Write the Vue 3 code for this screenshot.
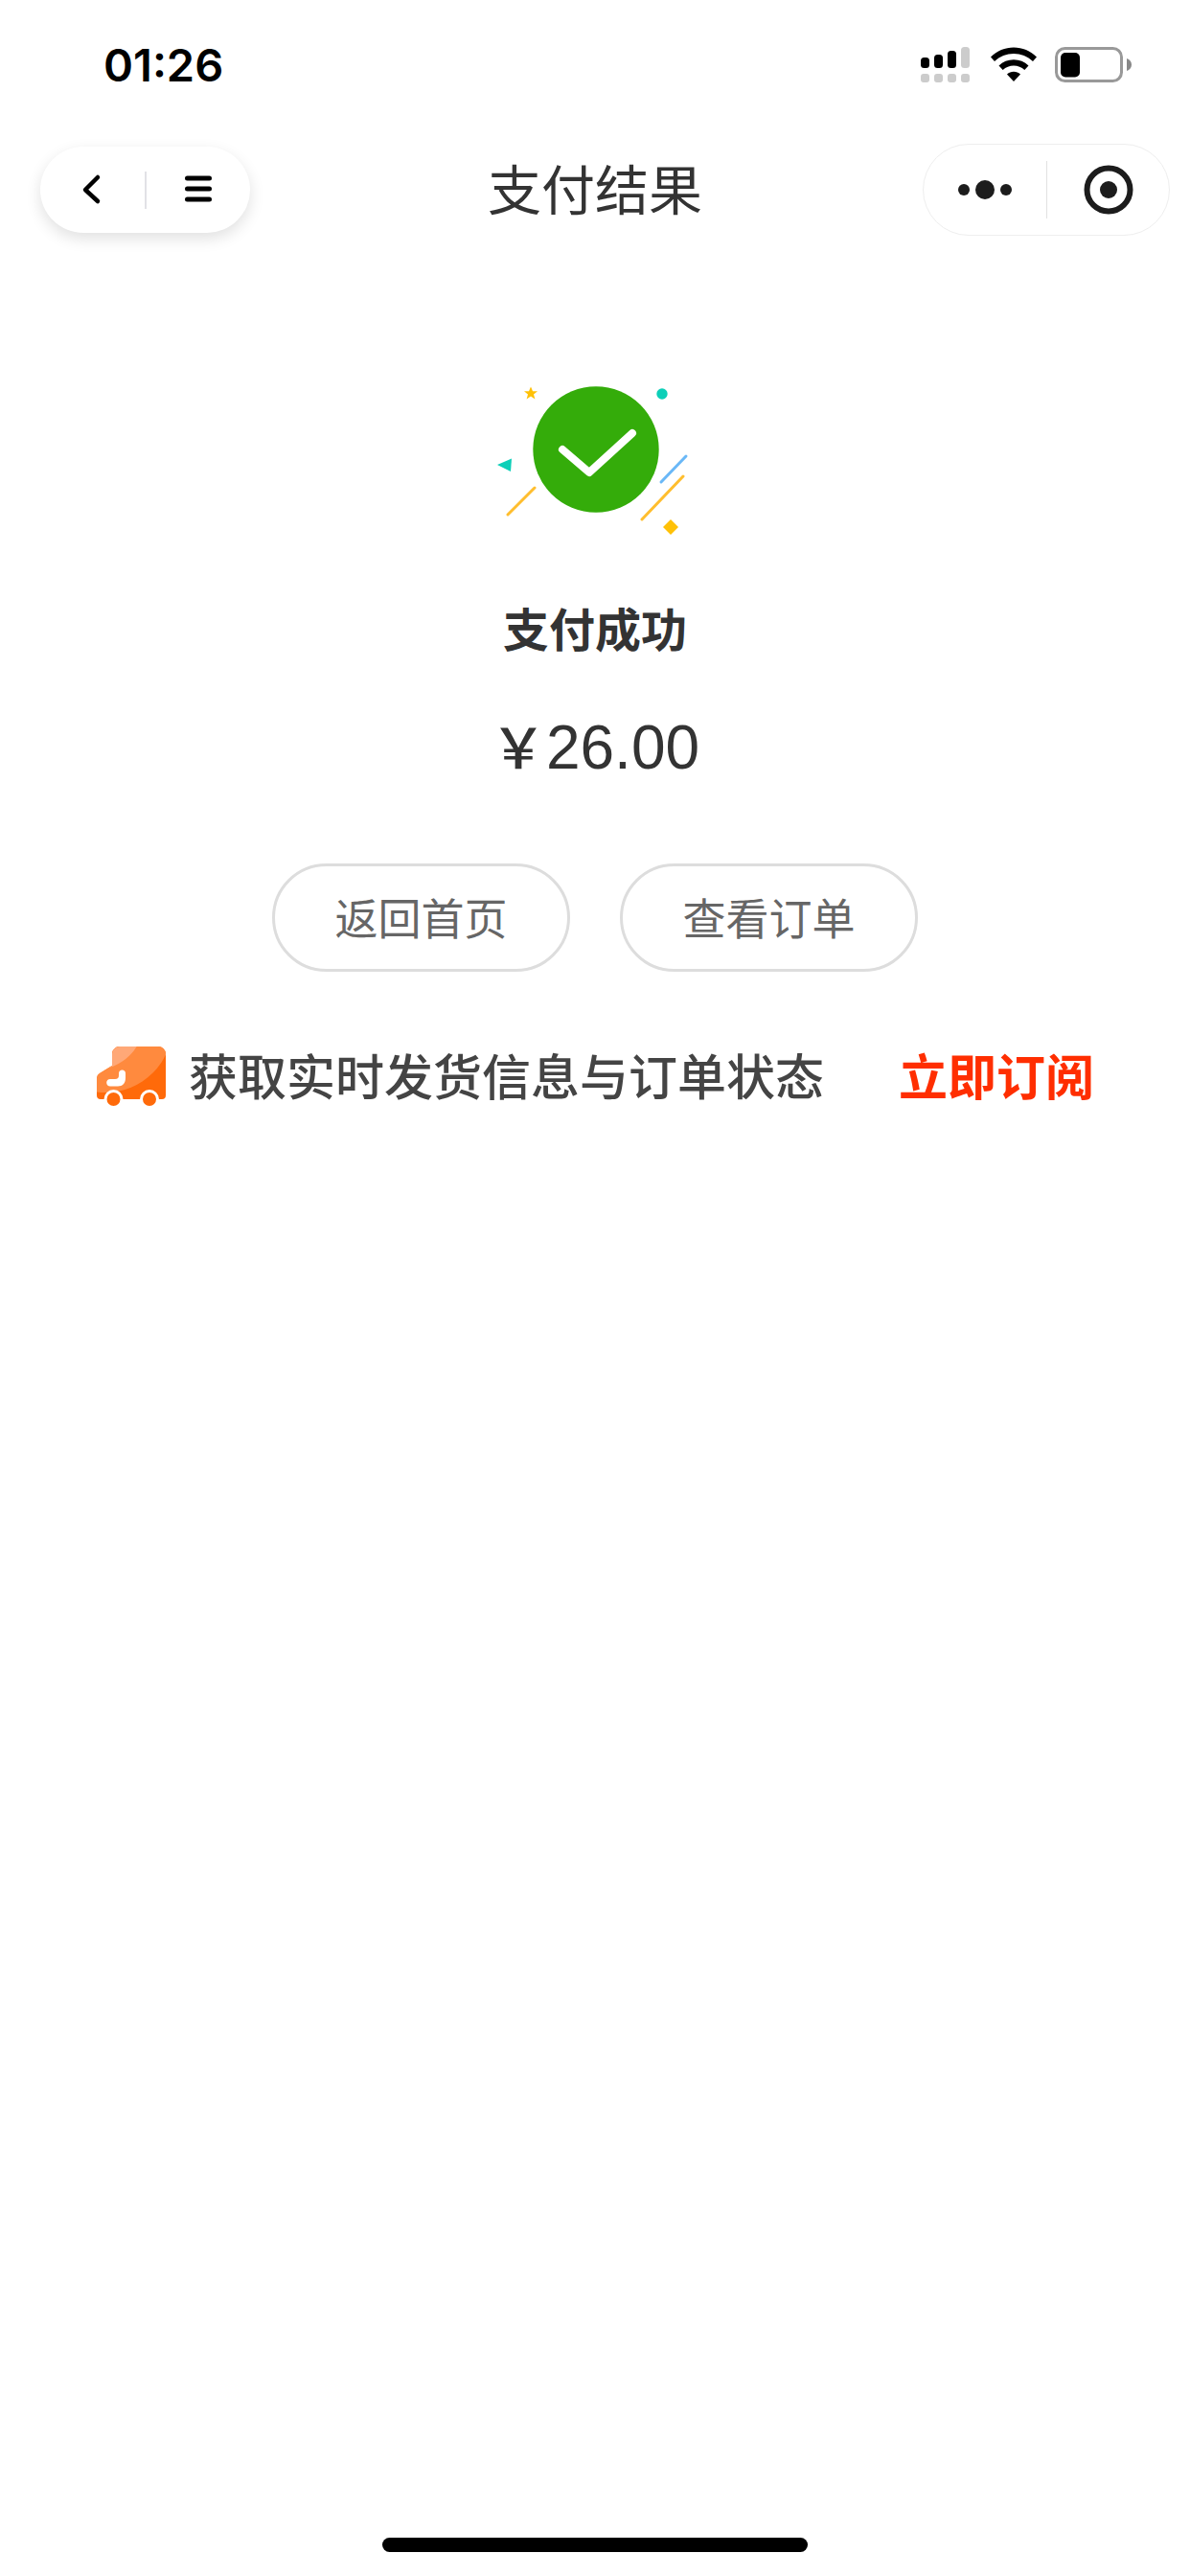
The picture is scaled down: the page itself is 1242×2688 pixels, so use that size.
<template>
  <div class="page">
    <div class="status">
      <span class="time">01:26</span>
      <div class="status-icons">
        <svg width="51" height="37" viewBox="0 0 51 37">
          <rect x="0" y="11" width="9" height="11" rx="3.5" fill="#000" />
          <rect x="14" y="8" width="9" height="14" rx="3.5" fill="#000" />
          <rect x="28" y="4" width="9" height="18" rx="3.5" fill="#000" />
          <rect x="42" y="0" width="9" height="22" rx="3.5" fill="#ccc" />
          <rect x="0" y="28" width="9" height="9" rx="3" fill="#ccc" />
          <rect x="14" y="28" width="9" height="9" rx="3" fill="#ccc" />
          <rect x="28" y="28" width="9" height="9" rx="3" fill="#ccc" />
          <rect x="42" y="28" width="9" height="9" rx="3" fill="#ccc" />
        </svg>
        <svg class="wifi" width="48" height="36" viewBox="0 0 48 36">
          <path d="M0 10.500C6.500 4 15 .5 24 .5s17.500 3.500 24 10l-4 4.500C38.500 9.800 31.500 7 24 7S9.500 9.800 4 15z" fill="#000" />
          <path d="M8.500 19.500C12.700 15.500 18 13.300 24 13.300s11.300 2.200 15.500 6.200l-4.200 4.500C32.200 21 28.300 19.500 24 19.500S15.800 21 12.700 24z" fill="#000" />
          <path d="M17 28.500c2-1.800 4.400-2.700 7-2.700s5 .900 7 2.700L24 36z" fill="#000" />
        </svg>
        <svg class="battery" width="80" height="37" viewBox="0 0 80 37">
          <rect x="1.500" y="1.500" width="68" height="34" rx="9" fill="none" stroke="#999" stroke-width="3" />
          <rect x="6" y="6" width="20" height="25.500" rx="5" fill="#000" />
          <path d="M75 12c3 1 5 3.500 5 6.500s-2 5.500-5 6.500z" fill="#888" />
        </svg>
      </div>
    </div>

    <div class="nav">
      <div class="capsule-left">
        <svg width="30" height="36" viewBox="0 0 30 36">
          <path d="M20 5L7 18l13 12" fill="none" stroke="#000" stroke-width="4.500" stroke-linecap="round" stroke-linejoin="round" />
        </svg>
        <i class="line"></i>
        <svg width="30" height="30" viewBox="0 0 30 30">
          <path d="M3.500 3h23M3.500 14h23M3.500 25h23" fill="none" stroke="#000" stroke-width="5" stroke-linecap="round" />
        </svg>
      </div>
      <div class="title">支付结果</div>
      <div class="capsule-right">
        <svg width="68" height="24" viewBox="0 0 68 24">
          <circle cx="12" cy="12" r="6" fill="#1c1c1c" />
          <circle cx="34" cy="12" r="10" fill="#1c1c1c" />
          <circle cx="56" cy="12" r="6" fill="#1c1c1c" />
        </svg>
        <i class="line"></i>
        <svg width="52" height="52" viewBox="0 0 52 52">
          <circle cx="26" cy="26" r="22.500" fill="none" stroke="#1c1c1c" stroke-width="6" />
          <circle cx="26" cy="26" r="9" fill="#1c1c1c" />
        </svg>
      </div>
    </div>

    <div class="result">
      <svg class="success-icon" width="260" height="190" viewBox="0 0 260 190">
        <circle cx="131" cy="89" r="65.700" fill="#34ac0a" />
        <path d="M96 89l28 24 45-41" fill="none" stroke="#fff" stroke-width="8" stroke-linecap="round" stroke-linejoin="round" />
        <path d="M63 23.500l2 4.700h5l-4 3.300 1.400 5-4.400-2.900-4.400 2.900 1.400-5-4-3.300h5z" fill="#ffc107" />
        <circle cx="200" cy="31" r="5.700" fill="#0ccfb8" />
        <path d="M28 105l15-6.500-1 13.500z" fill="#0ccfb8" />
        <path d="M199 123l26-27" stroke="#6ab8f7" stroke-width="3" stroke-linecap="round" />
        <path d="M179 162l43-45M39 157l28-28" stroke="#ffbe2e" stroke-width="3" stroke-linecap="round" />
        <path d="M209 162l8 8-8 8-8-8z" fill="#ffc107" />
      </svg>
      <div class="result-title">支付成功</div>
      <div class="amount"><span class="yen">￥</span>26.00</div>
      <div class="actions">
        <div class="btn">返回首页</div>
        <div class="btn">查看订单</div>
      </div>
    </div>

    <div class="subscribe">
      <svg class="truck" width="74" height="65" viewBox="20 31 74 65">
        <defs>
          <clipPath id="truck-body">
            <path d="M37 40a8 8 0 0 1 8-8h40a8 8 0 0 1 8 8v43a4 4 0 0 1-4 4H25a4 4 0 0 1-4-4V65a6 6 0 0 1 3-5l13-8z" />
          </clipPath>
        </defs>
        <g clip-path="url(#truck-body)">
          <rect x="20" y="31" width="74" height="60" fill="#ff6a0a" />
          <circle cx="30" cy="10" r="70" fill="#ff8a3e" />
          <circle cx="20" cy="6" r="50" fill="#ffa877" />
        </g>
        <path d="M35 66h5c3 0 4-1.500 4-4v-2c0-2 1.500-3.500 3.500-3.500S51 58 51 60v5c0 5-3 8.500-8 8.500h-8c-2.200 0-3.800-1.600-3.800-3.700S32.800 66 35 66z" fill="#fff" />
        <circle cx="38.500" cy="87" r="8.500" fill="#ff6a0a" stroke="#fff" stroke-width="3" />
        <circle cx="76" cy="87" r="8.500" fill="#ff6a0a" stroke="#fff" stroke-width="3" />
      </svg>
      <span class="sub-text">获取实时发货信息与订单状态</span>
      <span class="sub-link">立即订阅</span>
    </div>

    <div class="home-bar"></div>
  </div>
</template>

<script setup>
</script>

<style scoped>
.page {
  position: relative;
  width: 1242px;
  height: 2688px;
  background: #fff;
  overflow: hidden;
  font-family: "Noto Sans CJK SC", "Liberation Sans", sans-serif;
  color: #333;
}

.status {
  display: flex;
  align-items: center;
  justify-content: space-between;
  height: 37px;
  padding: 49px 61px 0 108px;
}

.time {
  font-family: Inter, "Liberation Sans", sans-serif;
  font-size: 47px;
  font-weight: 600;
  color: #000;
  line-height: 37px;
}

.status-icons {
  display: flex;
  align-items: flex-start;
}

.wifi {
  margin-left: 22px;
}

.battery {
  margin-left: 19px;
}

.nav {
  display: grid;
  grid-template-columns: 1fr auto 1fr;
  align-items: center;
  height: 96px;
  margin-top: 64px;
}

.capsule-left {
  display: flex;
  align-items: center;
  justify-content: space-between;
  justify-self: start;
  box-sizing: border-box;
  width: 219px;
  height: 90px;
  margin-left: 42px;
  padding: 0 39px 0 40px;
  border-radius: 45px;
  background: #fff;
  box-shadow: 0 6px 16px rgba(0, 0, 0, 0.12);
}

.capsule-left .line {
  width: 2px;
  height: 39px;
  background: #e2e2e6;
}

.capsule-right {
  display: flex;
  align-items: center;
  justify-self: end;
  box-sizing: border-box;
  width: 258px;
  height: 96px;
  margin-right: 21px;
  padding-left: 30px;
  border: 1px solid #eee;
  border-radius: 48px;
}

.capsule-right .line {
  width: 1px;
  height: 60px;
  margin: 0 38px 0 30px;
  background: #e2e2e2;
}

.title {
  padding-bottom: 6px;
  font-size: 56px;
  line-height: 90px;
  color: #333;
}

.result {
  display: flex;
  flex-direction: column;
  align-items: center;
  margin-top: 134px;
}

.result-title {
  margin-top: 52px;
  font-size: 48px;
  line-height: 64px;
  font-weight: 700;
  color: #333;
}

.amount {
  margin-top: 51px;
  font-family: "Liberation Sans", sans-serif;
  font-size: 64px;
  line-height: 80px;
  color: #333;
}

.yen {
  font-family: "Noto Sans CJK SC", sans-serif;
  font-size: 58px;
  font-weight: 500;
}

.actions {
  display: flex;
  gap: 52px;
  margin-top: 81px;
}

.btn {
  box-sizing: border-box;
  width: 311px;
  height: 113px;
  border: 3px solid #ddd;
  border-radius: 57px;
  font-size: 45px;
  line-height: 105px;
  text-align: center;
  color: #666;
}

.subscribe {
  display: flex;
  align-items: center;
  height: 65px;
  margin-top: 74px;
  padding-left: 100px;
}

.truck {
  margin-top: 6px;
}

.sub-text {
  margin-left: 23px;
  font-size: 51px;
  font-weight: 500;
  color: #444;
  white-space: nowrap;
}

.sub-link {
  margin-left: 78px;
  font-size: 51px;
  font-weight: 700;
  color: #ff2e00;
  white-space: nowrap;
}

.home-bar {
  position: absolute;
  left: 399px;
  bottom: 25px;
  width: 444px;
  height: 15px;
  border-radius: 8px;
  background: #000;
}
</style>
